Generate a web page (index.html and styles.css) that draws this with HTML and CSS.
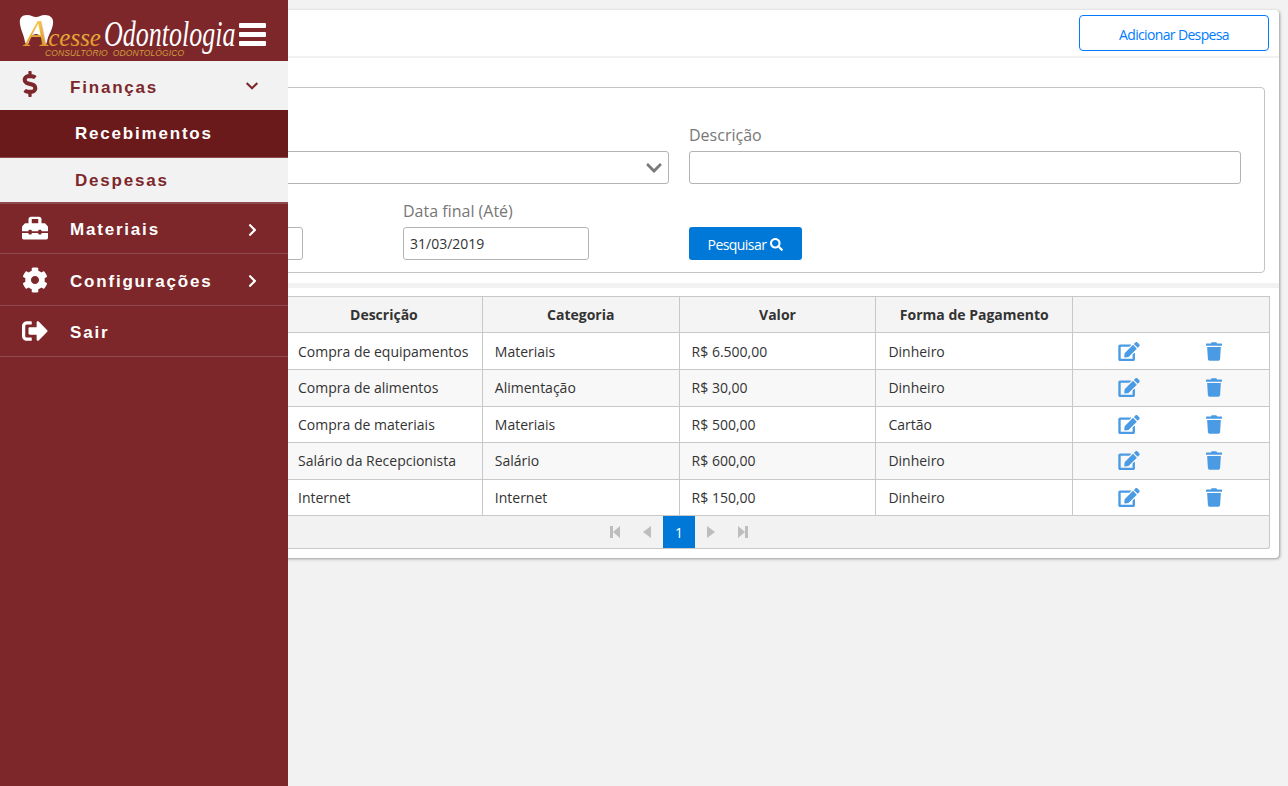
FILE: index.html
```html
<!DOCTYPE html>
<html lang="pt-BR">
<head>
    <meta charset="UTF-8">
    <meta name="viewport" content="width=device-width, initial-scale=1.0">
    <title>Despesas</title>
    <link rel="stylesheet" href="styles.css">
</head>
<body>
    <svg class="sprite" aria-hidden="true">
        <symbol id="i-dollar" viewBox="0 0 288 512"><path d="M209.2 233.4l-108-31.6C88.7 198.2 80 186.5 80 173.5c0-16.3 13.2-29.5 29.5-29.5h66.3c12.2 0 24.2 3.7 34.2 10.5 6.1 4.1 14.3 3.1 19.5-2l34.8-34c7.1-6.9 6.1-18.4-1.8-24.5C238 74.8 207.4 64.1 176 64V16c0-8.8-7.2-16-16-16h-32c-8.8 0-16 7.2-16 16v48h-2.5C45.8 64-5.4 118.7.5 183.6c4.2 46.1 39.4 83.6 83.8 96.6l102.5 30c12.5 3.7 21.2 15.3 21.2 28.3 0 16.3-13.2 29.5-29.5 29.5h-66.3C100 368 88 364.3 78 357.5c-6.1-4.1-14.3-3.1-19.5 2l-34.8 34c-7.1 6.9-6.1 18.4 1.8 24.5 24.5 19.2 55.1 29.9 86.5 30v48c0 8.8 7.2 16 16 16h32c8.8 0 16-7.2 16-16v-48.2c46.6-.9 90.3-28.6 105.7-72.7 21.5-61.6-14.6-124.8-72.5-141.7z"/></symbol>
        <symbol id="i-toolbox" viewBox="0 0 512 512"><path d="M502.63 214.63l-45.25-45.25c-6-6-14.14-9.37-22.63-9.37H384V80c0-26.51-21.49-48-48-48H176c-26.51 0-48 21.49-48 48v80H77.25c-8.49 0-16.62 3.37-22.63 9.37L9.37 214.63c-6 6-9.37 14.14-9.37 22.63V320h128v-16c0-8.84 7.16-16 16-16h32c8.84 0 16 7.16 16 16v16h128v-16c0-8.84 7.16-16 16-16h32c8.84 0 16 7.16 16 16v16h128v-82.75c0-8.48-3.37-16.62-9.37-22.62zM320 160H192V80h128v80zm64 208c0 8.84-7.16 16-16 16h-32c-8.84 0-16-7.16-16-16v-16H192v16c0 8.84-7.16 16-16 16h-32c-8.84 0-16-7.16-16-16v-16H0v96c0 17.67 14.33 32 32 32h448c17.67 0 32-14.33 32-32v-96H384v16z"/></symbol>
        <symbol id="i-cog" viewBox="0 0 512 512"><path d="M487.4 315.7l-42.6-24.6c4.3-23.2 4.3-47 0-70.2l42.6-24.6c4.9-2.8 7.1-8.6 5.5-14-11.1-35.6-30-67.8-54.7-94.6-3.8-4.1-10-5.1-14.8-2.3L380.8 110c-17.9-15.4-38.5-27.3-60.8-35.1V25.8c0-5.6-3.9-10.5-9.4-11.7-36.7-8.2-74.3-7.8-109.2 0-5.5 1.2-9.4 6.1-9.4 11.7V75c-22.2 7.9-42.8 19.8-60.8 35.1L88.7 85.5c-4.9-2.8-11-1.9-14.8 2.3-24.7 26.7-43.6 58.9-54.7 94.6-1.7 5.4.6 11.2 5.5 14L67.3 221c-4.3 23.2-4.3 47 0 70.2l-42.6 24.6c-4.9 2.8-7.1 8.6-5.5 14 11.1 35.6 30 67.8 54.7 94.6 3.8 4.1 10 5.1 14.8 2.3l42.6-24.6c17.9 15.4 38.5 27.3 60.8 35.1v49.2c0 5.6 3.9 10.5 9.4 11.7 36.7 8.2 74.3 7.8 109.2 0 5.5-1.2 9.4-6.1 9.4-11.7v-49.2c22.2-7.9 42.8-19.8 60.8-35.1l42.6 24.6c4.9 2.8 11 1.9 14.8-2.3 24.7-26.7 43.6-58.9 54.7-94.6 1.5-5.5-.7-11.3-5.6-14.1zM256 336c-44.1 0-80-35.9-80-80s35.9-80 80-80 80 35.9 80 80-35.9 80-80 80z"/></symbol>
        <symbol id="i-signout" viewBox="0 0 512 512"><path d="M497 273L329 441c-15 15-41 4.5-41-17v-96H152c-13.3 0-24-10.7-24-24v-96c0-13.3 10.7-24 24-24h136V88c0-21.4 25.9-32 41-17l168 168c9.3 9.4 9.3 24.6 0 34zM192 436v-40c0-6.6-5.4-12-12-12H96c-17.7 0-32-14.3-32-32V160c0-17.7 14.3-32 32-32h84c6.6 0 12-5.4 12-12V76c0-6.6-5.4-12-12-12H96c-53 0-96 43-96 96v192c0 53 43 96 96 96h84c6.6 0 12-5.4 12-12z"/></symbol>
        <symbol id="i-right" viewBox="0 0 320 512"><path d="M285.476 272.971L91.132 467.314c-9.373 9.373-24.569 9.373-33.941 0l-22.667-22.667c-9.357-9.357-9.375-24.522-.04-33.901L188.505 256 34.484 101.255c-9.335-9.379-9.317-24.544.04-33.901l22.667-22.667c9.373-9.373 24.569-9.373 33.941 0L285.475 239.03c9.373 9.372 9.373 24.568.001 33.941z"/></symbol>
        <symbol id="i-down" viewBox="0 0 448 512"><path d="M207.029 381.476L12.686 187.132c-9.373-9.373-9.373-24.569 0-33.941l22.667-22.667c9.357-9.357 24.522-9.375 33.901-.04L224 284.505l154.745-154.021c9.379-9.335 24.544-9.317 33.901.04l22.667 22.667c9.373 9.373 9.373 24.569 0 33.941L240.971 381.476c-9.373 9.372-24.569 9.372-33.942 0z"/></symbol>
        <symbol id="i-edit" viewBox="0 0 576 512"><path d="M402.6 83.2l90.2 90.2c3.8 3.8 3.8 10 0 13.8L274.4 405.6l-92.8 10.3c-12.4 1.4-22.9-9.1-21.5-21.5l10.3-92.8L388.8 83.2c3.8-3.8 10-3.8 13.8 0zm162-22.9l-48.8-48.8c-15.2-15.2-39.9-15.2-55.2 0l-35.4 35.4c-3.8 3.8-3.8 10 0 13.8l90.2 90.2c3.8 3.8 10 3.8 13.8 0l35.4-35.4c15.2-15.3 15.2-40 0-55.2zM384 346.2V448H64V128h229.8c3.2 0 6.2-1.3 8.5-3.5l40-40c7.6-7.6 2.2-20.5-8.5-20.5H48C21.5 64 0 85.5 0 112v352c0 26.5 21.5 48 48 48h352c26.5 0 48-21.5 48-48V306.2c0-10.7-12.9-16-20.5-8.5l-40 40c-2.2 2.3-3.5 5.3-3.5 8.5z"/></symbol>
        <symbol id="i-trash" viewBox="0 0 448 512"><path d="M432 32H312l-9.4-18.7A24 24 0 0 0 281.1 0H166.8a23.72 23.72 0 0 0-21.4 13.3L136 32H16A16 16 0 0 0 0 48v32a16 16 0 0 0 16 16h416a16 16 0 0 0 16-16V48a16 16 0 0 0-16-16zM53.2 467a48 48 0 0 0 47.9 45h245.8a48 48 0 0 0 47.9-45L416 128H32z"/></symbol>
        <symbol id="i-search" viewBox="0 0 512 512"><path d="M505 442.7L405.3 343c-4.5-4.5-10.6-7-17-7H372c27.6-35.3 44-79.7 44-128C416 93.1 322.9 0 208 0S0 93.1 0 208s93.1 208 208 208c48.3 0 92.7-16.4 128-44v16.3c0 6.4 2.5 12.5 7 17l99.7 99.7c9.4 9.4 24.6 9.4 33.9 0l28.3-28.3c9.4-9.4 9.4-24.6.1-34zM208 336c-70.7 0-128-57.2-128-128 0-70.7 57.2-128 128-128 70.7 0 128 57.2 128 128 0 70.7-57.2 128-128 128z"/></symbol>
        <symbol id="i-first" viewBox="0 0 12 14"><path d="M1 1h3v12H1zM11 1v12L4 7z"/></symbol>
        <symbol id="i-prev" viewBox="0 0 12 14"><path d="M10 1v12L2 7z"/></symbol>
        <symbol id="i-next" viewBox="0 0 12 14"><path d="M2 1v12l8-6z"/></symbol>
        <symbol id="i-last" viewBox="0 0 12 14"><path d="M1 1v12l7-6zM8 1h3v12H8z"/></symbol>
    </svg>

    <aside class="sidebar">
        <header class="brand">
            <svg class="logo" viewBox="0 0 220 61" width="220" height="61">
                <defs>
                    <linearGradient id="gold" x1="0" y1="0" x2="0" y2="1">
                        <stop offset="0" stop-color="#f8d65e"/>
                        <stop offset="1" stop-color="#d98a1e"/>
                    </linearGradient>
                </defs>
                <path class="tooth" d="M1 24C0 18 3 15 8 15c4 0 6 2 9 2s5-2 9-2c5 0 9 3 8 9-1 7-5 11-6 18-1 3-3 3-4 0-1-4-3-8-7-8s-6 4-7 8c-1 3-3 3-4 0-1-7-4-11-5-18z"/>
                <text class="logo-acesse" x="6" y="46" fill="url(#gold)"><tspan class="logo-cap">A</tspan>cesse</text>
                <text class="logo-odonto" transform="translate(85 46) scale(1 1.35)">Odontologia</text>
                <text class="logo-sub" x="26" y="56">CONSULTÓRIO  ODONTOLÓGICO</text>
            </svg>
            <div class="burger"><span></span><span></span><span></span></div>
        </header>
        <nav>
            <a class="menu-item is-open">
                <svg class="menu-icon icon-dollar"><use href="#i-dollar"/></svg>
                <span class="menu-label">Finanças</span>
                <svg class="menu-arrow down"><use href="#i-down"/></svg>
            </a>
            <a class="sub-item is-active">Recebimentos</a>
            <a class="sub-item">Despesas</a>
            <a class="menu-item row-short">
                <svg class="menu-icon icon-tool"><use href="#i-toolbox"/></svg>
                <span class="menu-label">Materiais</span>
                <svg class="menu-arrow"><use href="#i-right"/></svg>
            </a>
            <a class="menu-item row-tall">
                <svg class="menu-icon"><use href="#i-cog"/></svg>
                <span class="menu-label">Configurações</span>
                <svg class="menu-arrow"><use href="#i-right"/></svg>
            </a>
            <a class="menu-item">
                <svg class="menu-icon"><use href="#i-signout"/></svg>
                <span class="menu-label">Sair</span>
            </a>
        </nav>
    </aside>

    <main class="card">
        <div class="card-top">
            <button class="btn-outline">Adicionar Despesa</button>
        </div>
        <section class="filter-wrap">
            <form class="filter">
                <div class="field">
                    <label></label>
                    <div class="select"><svg class="select-arrow"><use href="#i-down"/></svg></div>
                </div>
                <div class="field">
                    <label>Descrição</label>
                    <input type="text">
                </div>
                <div class="dates">
                    <div class="field">
                        <label></label>
                        <input type="text">
                    </div>
                    <div class="field">
                        <label>Data final (Até)</label>
                        <input type="text" value="31/03/2019">
                    </div>
                </div>
                <div class="field-action">
                    <button type="button" class="btn-primary">Pesquisar <svg class="btn-icon"><use href="#i-search"/></svg></button>
                </div>
            </form>
        </section>
        <section class="grid-wrap">
            <table class="grid">
                <thead>
                    <tr>
                        <th class="col-first"></th>
                        <th>Descrição</th>
                        <th>Categoria</th>
                        <th>Valor</th>
                        <th>Forma de Pagamento</th>
                        <th></th>
                    </tr>
                </thead>
                <tbody>
                    <tr>
                        <td></td><td>Compra de equipamentos</td><td>Materiais</td><td>R$ 6.500,00</td><td>Dinheiro</td>
                        <td><div class="actions"><svg class="act-edit"><use href="#i-edit"/></svg><svg class="act-trash"><use href="#i-trash"/></svg></div></td>
                    </tr>
                    <tr>
                        <td></td><td>Compra de alimentos</td><td>Alimentação</td><td>R$ 30,00</td><td>Dinheiro</td>
                        <td><div class="actions"><svg class="act-edit"><use href="#i-edit"/></svg><svg class="act-trash"><use href="#i-trash"/></svg></div></td>
                    </tr>
                    <tr>
                        <td></td><td>Compra de materiais</td><td>Materiais</td><td>R$ 500,00</td><td>Cartão</td>
                        <td><div class="actions"><svg class="act-edit"><use href="#i-edit"/></svg><svg class="act-trash"><use href="#i-trash"/></svg></div></td>
                    </tr>
                    <tr>
                        <td></td><td>Salário da Recepcionista</td><td>Salário</td><td>R$ 600,00</td><td>Dinheiro</td>
                        <td><div class="actions"><svg class="act-edit"><use href="#i-edit"/></svg><svg class="act-trash"><use href="#i-trash"/></svg></div></td>
                    </tr>
                    <tr>
                        <td></td><td>Internet</td><td>Internet</td><td>R$ 150,00</td><td>Dinheiro</td>
                        <td><div class="actions"><svg class="act-edit"><use href="#i-edit"/></svg><svg class="act-trash"><use href="#i-trash"/></svg></div></td>
                    </tr>
                </tbody>
            </table>
            <div class="pager">
                <svg class="pager-icon"><use href="#i-first"/></svg>
                <svg class="pager-icon"><use href="#i-prev"/></svg>
                <span class="page-on">1</span>
                <svg class="pager-icon"><use href="#i-next"/></svg>
                <svg class="pager-icon"><use href="#i-last"/></svg>
            </div>
        </section>
    </main>
</body>
</html>
```

FILE: styles.css
```css
* {
    padding: 0;
    margin: 0;
    box-sizing: border-box;
}
body {
    height: 786px;
    overflow: hidden;
    background-color: #f2f2f2;
    font-family: "Open Sans", sans-serif;
    font-size: 14px;
    color: #333;
    padding: 10px 9px 0 10px;
}
.sprite {
    display: none;
}
svg {
    fill: currentColor;
}

/* sidebar */
.sidebar {
    position: absolute;
    top: 0;
    left: 0;
    width: 288px;
    height: 786px;
    background-color: #7d272b;
    font-family: "Liberation Sans", Arial, sans-serif;
    font-weight: bold;
    font-size: 17px;
    letter-spacing: 1.8px;
}
.brand {
    height: 61px;
    display: flex;
    align-items: center;
    padding-left: 19px;
}
.logo {
    flex: none;
    overflow: visible;
}
.tooth {
    fill: #fff;
}
.logo-acesse {
    font-family: "Liberation Serif", serif;
    font-style: italic;
    font-weight: normal;
    font-size: 25px;
    letter-spacing: 0;
}
.logo-cap {
    font-size: 38px;
}
.logo-odonto {
    font-family: "Liberation Serif", serif;
    font-style: italic;
    font-weight: normal;
    font-size: 26px;
    letter-spacing: 0;
    fill: #fff;
}
.logo-sub {
    font-family: "Liberation Sans", sans-serif;
    font-style: italic;
    font-weight: normal;
    font-size: 8.500px;
    letter-spacing: 0.1px;
    white-space: pre;
    fill: #cf9d3c;
}
.burger {
    display: flex;
    flex-direction: column;
    gap: 4px;
    width: 27px;
    margin-top: 8px;
}
.burger span {
    height: 5px;
    background-color: #fff;
    border-radius: 1px;
}
.menu-item {
    height: 51px;
    display: flex;
    align-items: center;
    padding-left: 21px;
    color: #fff;
    border-bottom: 1px solid #8f4a4d;
}
.menu-item.is-open {
    height: 50px;
    background-color: #f2f2f2;
    color: #7d272b;
    border-bottom: 1px solid #6b1a1c;
}
.menu-item.row-short {
    height: 50px;
}
.menu-item.row-tall {
    height: 52px;
}
.menu-icon {
    width: 28px;
    height: 26px;
    flex: none;
}
.icon-dollar {
    width: 17px;
    margin: -3px 11px 0 0;
    padding-left: 1px;
}
.icon-tool {
    margin-top: -2px;
}
.menu-label {
    margin: 4px 0 0 21px;
    flex: 1;
}
.row-short .menu-label {
    margin-top: 2px;
}
.menu-arrow {
    width: 11px;
    height: 14px;
    margin: 2px 30px 0 0;
    flex: none;
}
.menu-arrow.down {
    width: 12px;
    height: 14px;
    margin: 0 30px 0 0;
}
.sub-item {
    display: flex;
    align-items: center;
    height: 46px;
    padding: 1px 0 0 75px;
    background-color: #f2f2f2;
    color: #7d272b;
    border-bottom: 2px solid #8f4a4d;
}
.sub-item.is-active {
    background-color: #6b1a1c;
    color: #fff;
    height: 47px;
    padding-top: 0;
    border-bottom: 1px solid #8f4a4d;
}

/* card */
.card {
    background-color: #fff;
    border-radius: 4px;
    box-shadow: 1px 1px 3px #999;
}
.card-top {
    height: 48px;
    display: flex;
    justify-content: flex-end;
    padding: 5px 10px 0 0;
    border-bottom: 2px solid #f2f2f2;
}
.btn-outline {
    width: 190px;
    height: 36px;
    border: 1px solid #007bff;
    border-radius: 4px;
    background-color: #fff;
    color: #007bff;
    font-family: "Open Sans", sans-serif;
    font-size: 14px;
    letter-spacing: -0.65px;
    padding-top: 2px;
}
.filter-wrap {
    padding: 29px 14px 10px 10px;
    border-bottom: 5px solid #f2f2f2;
}
.filter {
    display: grid;
    grid-template-columns: 552px 552px;
    column-gap: 20px;
    row-gap: 16px;
    padding: 36px 24px 12px 96px;
    border: 1px solid #c4c4c4;
    border-radius: 4px;
}
.field {
    display: flex;
    flex-direction: column;
    gap: 5px;
}
label {
    height: 22px;
    line-height: 22px;
    font-size: 16px;
    color: #777;
}
input, .select {
    height: 33px;
    border: 1px solid #b4b4b4;
    border-radius: 3px;
    padding: 0 6px;
    font-family: "Open Sans", sans-serif;
    font-size: 14px;
    color: #333;
}
.select {
    display: flex;
    align-items: center;
    justify-content: flex-end;
    padding-right: 6px;
}
.select-arrow {
    width: 16px;
    height: 18px;
    color: #7a7a7a;
}
.dates {
    display: grid;
    grid-template-columns: 186px 186px;
    column-gap: 100px;
}
.field-action {
    display: flex;
    align-items: flex-end;
}
.btn-primary {
    width: 113px;
    height: 33px;
    border: none;
    border-radius: 3px;
    background-color: #0078d7;
    color: #fff;
    font-family: "Open Sans", sans-serif;
    font-size: 14px;
    letter-spacing: -0.55px;
    padding-top: 2px;
}
.btn-icon {
    width: 13px;
    height: 13px;
    vertical-align: -1px;
    margin-left: 1px;
}

/* table */
.grid-wrap {
    padding: 8px 9px 8.6px 10px;
}
.grid {
    width: 100%;
    border-collapse: collapse;
    table-layout: fixed;
}
.grid th, .grid td {
    border: 1px solid #c8c8c8;
    padding: 0 12px;
    text-align: left;
    height: 36.6px;
}
.grid th {
    height: 36.4px;
    background-color: #f4f4f4;
    text-align: center;
    font-weight: bold;
}
.col-first {
    width: 265px;
}
.grid tbody tr:nth-child(even) {
    background-color: #f8f8f8;
}
.actions {
    display: flex;
    justify-content: center;
    gap: 65px;
    color: #4a9be4;
    margin-right: 4px;
}
.act-edit {
    width: 24px;
    height: 19px;
}
.act-trash {
    width: 16px;
    height: 19px;
}
.pager {
    height: 33px;
    display: flex;
    justify-content: center;
    align-items: center;
    background-color: #f2f2f2;
    border: 1px solid #c8c8c8;
    border-top: none;
    border-bottom-left-radius: 3px;
    border-bottom-right-radius: 3px;
    padding-left: 68px;
}
.pager-icon {
    width: 32px;
    height: 14px;
    color: #bdbdbd;
}
.page-on {
    width: 32px;
    height: 32px;
    line-height: 33px;
    text-align: center;
    background-color: #0078d7;
    color: #fff;
}
```
